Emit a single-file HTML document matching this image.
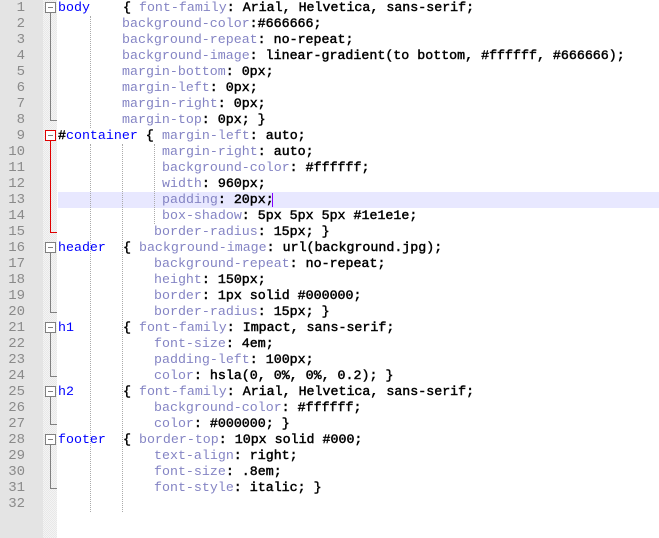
<!DOCTYPE html>
<html><head><style>
html,body{margin:0;padding:0}
body{width:659px;height:538px;overflow:hidden;background:#fff;position:relative;font-family:"Liberation Mono","Courier New",monospace;font-size:13.3px}
#gut{position:absolute;left:0;top:0;width:43px;height:538px;background:#e4e4e4}
#fold{position:absolute;left:43px;top:0;width:14px;height:538px;background-color:#f4f4f4;background-image:linear-gradient(45deg,#e8e8e8 25%,transparent 25%,transparent 75%,#e8e8e8 75%),linear-gradient(45deg,#e8e8e8 25%,transparent 25%,transparent 75%,#e8e8e8 75%);background-size:2px 2px;background-position:0 0,1px 1px}
.ln{position:absolute;left:0;width:25px;text-align:right;color:#8a8a8a;height:16px;line-height:16px;font-size:14px}
.t{position:absolute;height:16px;line-height:16px;white-space:pre}
.s{color:#0000ff}
.p{color:#8484c4}
.v{color:#000;-webkit-text-stroke:0.45px #000}
.b{color:#000;-webkit-text-stroke:0.45px #000}
.g{position:absolute;width:0;border-left:1px dotted #aaa}
.box{position:absolute;left:45px;width:9px;height:9px;border:1px solid #808080;background:#fff}
.box:after{content:"";position:absolute;left:2px;top:4px;width:5px;height:1px;background:#808080}
.vl{position:absolute;left:50px;width:6px;border-left:1px solid #808080;border-bottom:1px solid #808080}
</style></head><body>
<div id="gut"></div><div id="fold"></div>
<div style="position:absolute;left:58px;top:192px;width:601px;height:16px;background:#e8e8ff"></div>
<div style="position:absolute;left:272px;top:193px;width:1px;height:14px;background:#8000ff"></div>

<div class="g" style="left:90px;top:16px;height:112px"></div>
<div class="g" style="left:90px;top:144px;height:368px"></div>
<div class="g" style="left:122px;top:144px;height:368px"></div>
<div class="g" style="left:154px;top:144px;height:80px"></div>

<div class="box" style="top:2px"></div><div class="vl" style="top:13px;height:107px"></div>
<div class="box" style="top:130px;border-color:#e00000"></div><div class="vl" style="top:141px;height:91px;border-color:#e00000"></div>
<div class="box" style="top:242px"></div><div class="vl" style="top:253px;height:59px"></div>
<div class="box" style="top:322px"></div><div class="vl" style="top:333px;height:43px"></div>
<div class="box" style="top:386px"></div><div class="vl" style="top:397px;height:27px"></div>
<div class="box" style="top:434px"></div><div class="vl" style="top:445px;height:43px"></div>

<div class="ln" style="top:0">1</div><div class="ln" style="top:16px">2</div><div class="ln" style="top:32px">3</div><div class="ln" style="top:48px">4</div><div class="ln" style="top:64px">5</div><div class="ln" style="top:80px">6</div><div class="ln" style="top:96px">7</div><div class="ln" style="top:112px">8</div><div class="ln" style="top:128px">9</div><div class="ln" style="top:144px">10</div><div class="ln" style="top:160px">11</div><div class="ln" style="top:176px">12</div><div class="ln" style="top:192px">13</div><div class="ln" style="top:208px">14</div><div class="ln" style="top:224px">15</div><div class="ln" style="top:240px">16</div><div class="ln" style="top:256px">17</div><div class="ln" style="top:272px">18</div><div class="ln" style="top:288px">19</div><div class="ln" style="top:304px">20</div><div class="ln" style="top:320px">21</div><div class="ln" style="top:336px">22</div><div class="ln" style="top:352px">23</div><div class="ln" style="top:368px">24</div><div class="ln" style="top:384px">25</div><div class="ln" style="top:400px">26</div><div class="ln" style="top:416px">27</div><div class="ln" style="top:432px">28</div><div class="ln" style="top:448px">29</div><div class="ln" style="top:464px">30</div><div class="ln" style="top:480px">31</div><div class="ln" style="top:496px">32</div>

<div class="t s" style="left:58px;top:0">body</div>
<div class="t" style="left:123px;top:0"><span class="b">{</span> <span class="p">font-family</span><span class="b">:</span> <span class="v">Arial, Helvetica, sans-serif;</span></div>
<div class="t" style="left:122px;top:16px"><span class="p">background-color</span><span class="b">:</span><span class="v">#666666;</span></div>
<div class="t" style="left:122px;top:32px"><span class="p">background-repeat</span><span class="b">:</span> <span class="v">no-repeat;</span></div>
<div class="t" style="left:122px;top:48px"><span class="p">background-image</span><span class="b">:</span> <span class="v">linear-gradient(to bottom, #ffffff, #666666);</span></div>
<div class="t" style="left:122px;top:64px"><span class="p">margin-bottom</span><span class="b">:</span> <span class="v">0px;</span></div>
<div class="t" style="left:122px;top:80px"><span class="p">margin-left</span><span class="b">:</span> <span class="v">0px;</span></div>
<div class="t" style="left:122px;top:96px"><span class="p">margin-right</span><span class="b">:</span> <span class="v">0px;</span></div>
<div class="t" style="left:122px;top:112px"><span class="p">margin-top</span><span class="b">:</span> <span class="v">0px;</span> <span class="b">}</span></div>

<div class="t" style="left:58px;top:128px"><span class="b">#</span><span class="s">container</span> <span class="b">{</span></div>
<div class="t" style="left:162px;top:128px"><span class="p">margin-left</span><span class="b">:</span> <span class="v">auto;</span></div>
<div class="t" style="left:162px;top:144px"><span class="p">margin-right</span><span class="b">:</span> <span class="v">auto;</span></div>
<div class="t" style="left:162px;top:160px"><span class="p">background-color</span><span class="b">:</span> <span class="v">#ffffff;</span></div>
<div class="t" style="left:162px;top:176px"><span class="p">width</span><span class="b">:</span> <span class="v">960px;</span></div>
<div class="t" style="left:162px;top:192px"><span class="p">padding</span><span class="b">:</span> <span class="v">20px;</span></div>
<div class="t" style="left:162px;top:208px"><span class="p">box-shadow</span><span class="b">:</span> <span class="v">5px 5px 5px #1e1e1e;</span></div>
<div class="t" style="left:154px;top:224px"><span class="p">border-radius</span><span class="b">:</span> <span class="v">15px;</span> <span class="b">}</span></div>

<div class="t s" style="left:58px;top:240px">header</div>
<div class="t" style="left:123px;top:240px"><span class="b">{</span> <span class="p">background-image</span><span class="b">:</span> <span class="v">url(background.jpg);</span></div>
<div class="t" style="left:154px;top:256px"><span class="p">background-repeat</span><span class="b">:</span> <span class="v">no-repeat;</span></div>
<div class="t" style="left:154px;top:272px"><span class="p">height</span><span class="b">:</span> <span class="v">150px;</span></div>
<div class="t" style="left:154px;top:288px"><span class="p">border</span><span class="b">:</span> <span class="v">1px solid #000000;</span></div>
<div class="t" style="left:154px;top:304px"><span class="p">border-radius</span><span class="b">:</span> <span class="v">15px;</span> <span class="b">}</span></div>

<div class="t s" style="left:58px;top:320px">h1</div>
<div class="t" style="left:123px;top:320px"><span class="b">{</span> <span class="p">font-family</span><span class="b">:</span> <span class="v">Impact, sans-serif;</span></div>
<div class="t" style="left:154px;top:336px"><span class="p">font-size</span><span class="b">:</span> <span class="v">4em;</span></div>
<div class="t" style="left:154px;top:352px"><span class="p">padding-left</span><span class="b">:</span> <span class="v">100px;</span></div>
<div class="t" style="left:154px;top:368px"><span class="p">color</span><span class="b">:</span> <span class="v">hsla(0, 0%, 0%, 0.2);</span> <span class="b">}</span></div>

<div class="t s" style="left:58px;top:384px">h2</div>
<div class="t" style="left:123px;top:384px"><span class="b">{</span> <span class="p">font-family</span><span class="b">:</span> <span class="v">Arial, Helvetica, sans-serif;</span></div>
<div class="t" style="left:154px;top:400px"><span class="p">background-color</span><span class="b">:</span> <span class="v">#ffffff;</span></div>
<div class="t" style="left:154px;top:416px"><span class="p">color</span><span class="b">:</span> <span class="v">#000000;</span> <span class="b">}</span></div>

<div class="t s" style="left:58px;top:432px">footer</div>
<div class="t" style="left:123px;top:432px"><span class="b">{</span> <span class="p">border-top</span><span class="b">:</span> <span class="v">10px solid #000;</span></div>
<div class="t" style="left:154px;top:448px"><span class="p">text-align</span><span class="b">:</span> <span class="v">right;</span></div>
<div class="t" style="left:154px;top:464px"><span class="p">font-size</span><span class="b">:</span> <span class="v">.8em;</span></div>
<div class="t" style="left:154px;top:480px"><span class="p">font-style</span><span class="b">:</span> <span class="v">italic;</span> <span class="b">}</span></div>
</body></html>
